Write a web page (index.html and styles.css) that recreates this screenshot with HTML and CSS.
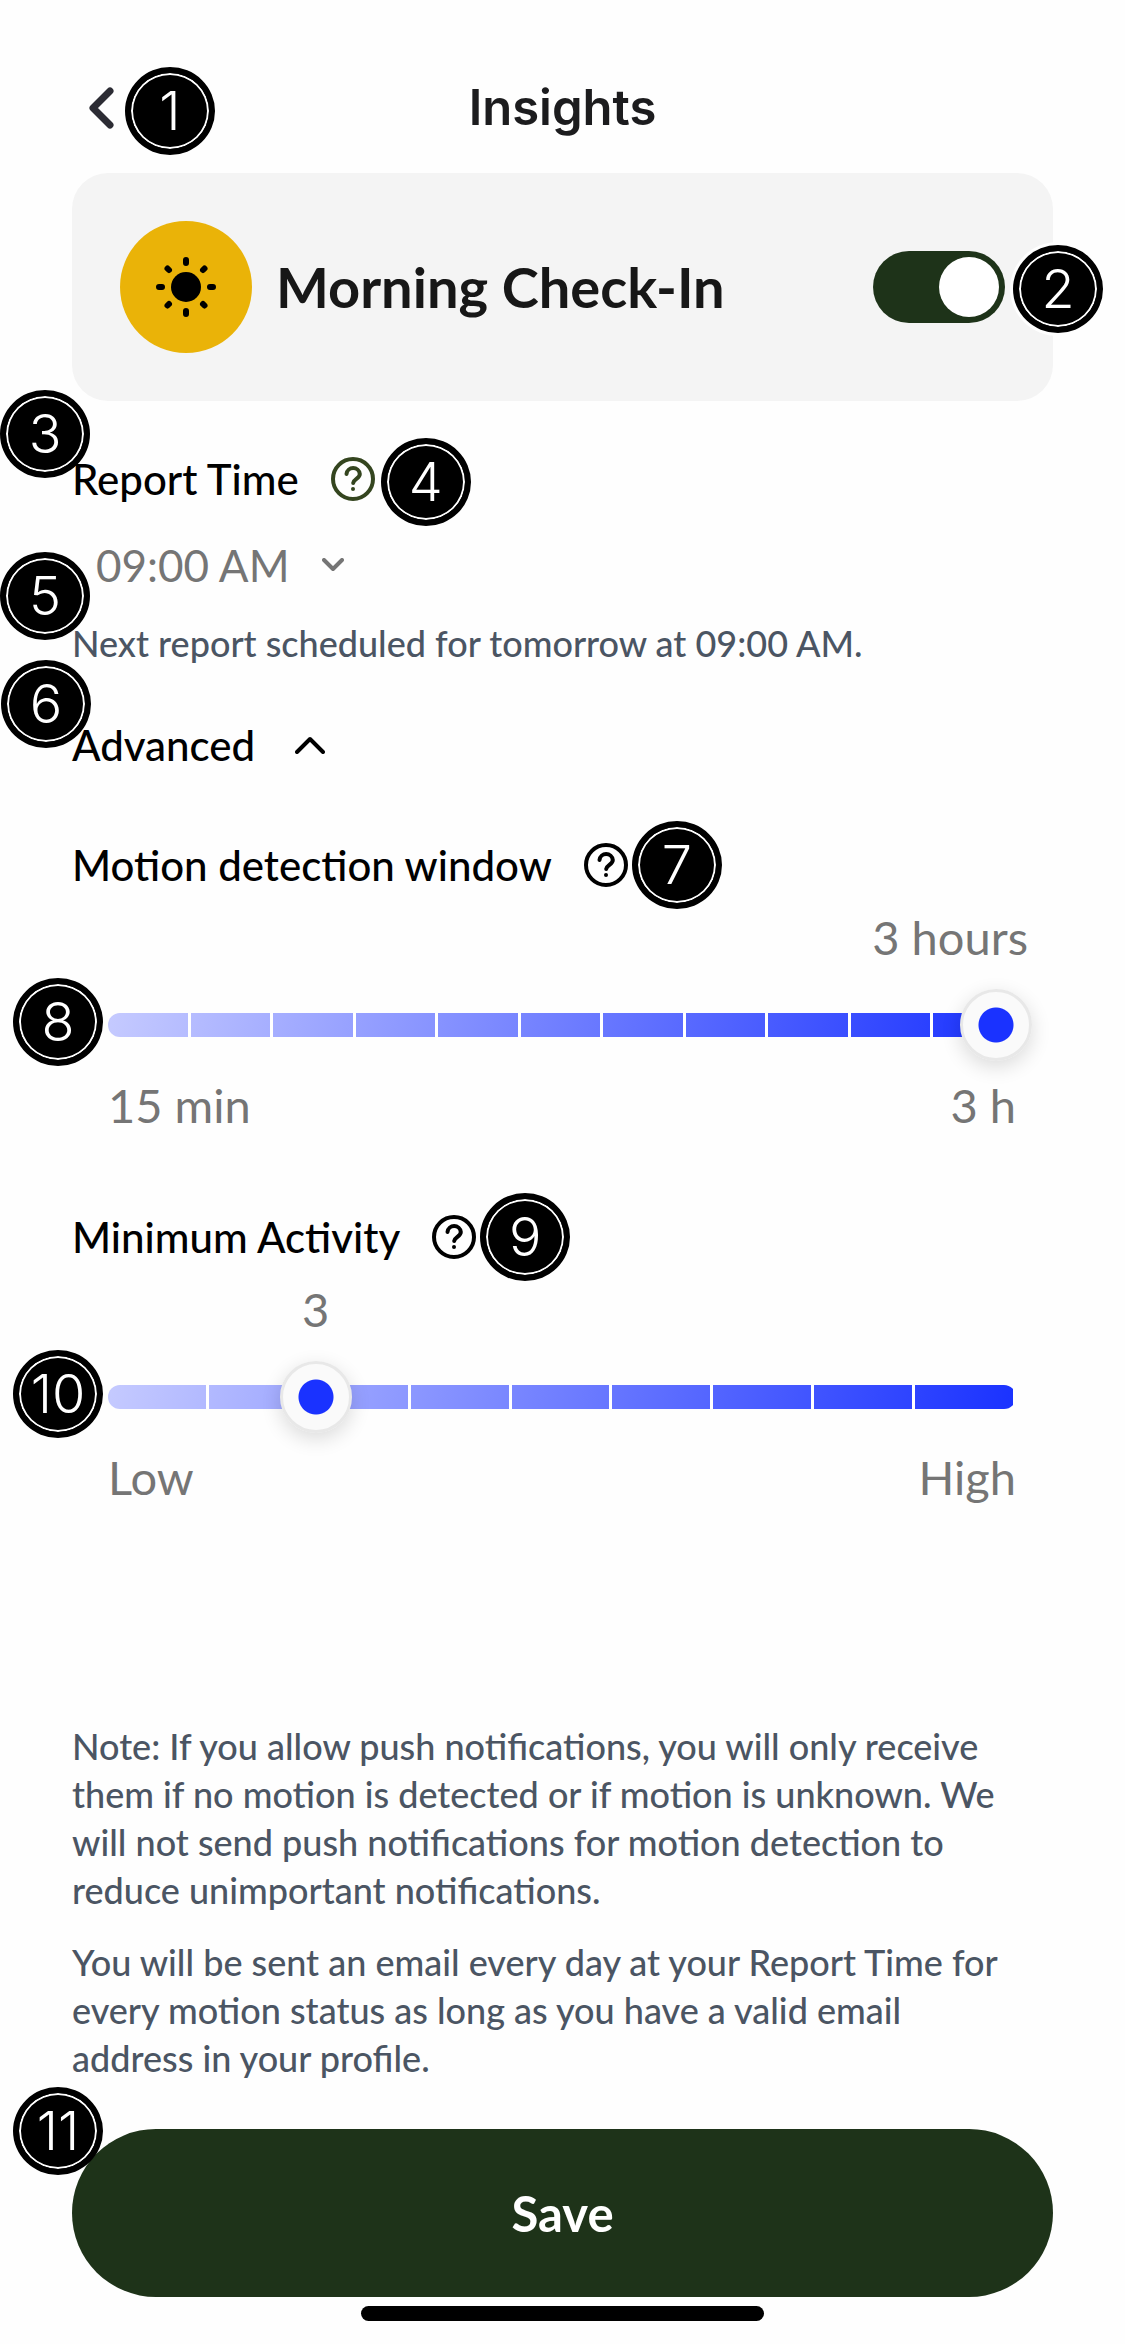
FILE: index.html
```html
<!DOCTYPE html>
<html lang="en">
<head>
<meta charset="utf-8">
<meta name="viewport" content="width=device-width, initial-scale=1">
<title>Insights</title>
<link rel="stylesheet" href="styles.css">
</head>
<body>
<svg class="sprite" aria-hidden="true">
  <symbol id="help" viewBox="0 0 44 44">
    <circle cx="22" cy="22" r="20"/>
    <path d="M15.500 17a6.700 6.700 0 0 1 13.300 0c0 4.600-6 5-6.600 9"/>
    <path class="dot" d="M22 32v.1"/>
  </symbol>
</svg>
<main class="screen">
  <header class="topbar">
    <button class="icon-button back" aria-label="Back">
      <svg width="26" height="42" viewBox="0 0 26 42"><path d="M22 4 5 21l17 17"/></svg>
      <span class="marker marker-1">1</span>
    </button>
    <h1 class="title">Insights</h1>
  </header>

  <section class="card">
    <span class="sun">
      <svg width="62" height="62" viewBox="0 0 62 62">
        <circle class="core" cx="31" cy="31" r="15"/>
        <path d="M31 4v3M31 55v3M4 31h3M55 31h3M12.500 12.500l1.500 1.500M48 48l1.500 1.500M49.500 12.500 48 14M14 48l-1.500 1.500"/>
      </svg>
    </span>
    <label class="card-title" for="morning">Morning Check-In</label>
    <span class="switch-wrap">
      <input class="switch" id="morning" type="checkbox" role="switch" checked>
      <span class="marker marker-2">2</span>
    </span>
  </section>

  <section class="report">
    <div class="row label-row">
      <span class="marker marker-3">3</span>
      <h2 class="label">Report Time</h2>
      <button class="icon-button help green" aria-label="About report time">
        <svg width="44" height="44"><use href="#help"/></svg>
        <span class="marker marker-help">4</span>
      </button>
    </div>
    <div class="row time-row">
      <span class="marker marker-5">5</span>
      <button class="time">09:00 AM
        <svg width="22" height="14" viewBox="0 0 22 14"><path d="m2 2 9 9 9-9"/></svg>
      </button>
    </div>
    <p class="text">Next report scheduled for tomorrow at 09:00 AM.</p>
  </section>

  <div class="row advanced-row">
    <span class="marker marker-6">6</span>
    <button class="label advanced" aria-expanded="true">Advanced
      <svg width="30" height="18" viewBox="0 0 30 18"><path d="M2 16 15 3l13 13"/></svg>
    </button>
  </div>

  <section class="setting">
    <div class="row label-row">
      <label class="label" for="window">Motion detection window</label>
      <button class="icon-button help" aria-label="About motion detection window">
        <svg width="44" height="44"><use href="#help"/></svg>
        <span class="marker marker-help">7</span>
      </button>
    </div>
    <div class="slider-block">
      <div class="value-row value-end"><output class="value" for="window">3 hours</output></div>
      <div class="slider">
        <span class="marker marker-slider">8</span>
        <span class="track" style="--steps: 11"></span>
        <input id="window" type="range" min="15" max="180" step="15" value="180">
      </div>
      <div class="ends"><span>15 min</span><span>3 h</span></div>
    </div>
  </section>

  <section class="setting activity">
    <div class="row label-row">
      <label class="label" for="activity">Minimum Activity</label>
      <button class="icon-button help" aria-label="About minimum activity">
        <svg width="44" height="44"><use href="#help"/></svg>
        <span class="marker marker-help">9</span>
      </button>
    </div>
    <div class="slider-block">
      <div class="value-row"><output class="value value-at" for="activity" style="--at: 22.2%">3</output></div>
      <div class="slider">
        <span class="marker marker-slider">10</span>
        <span class="track" style="--steps: 9"></span>
        <input id="activity" type="range" min="1" max="10" step="1" value="3">
      </div>
      <div class="ends"><span>Low</span><span>High</span></div>
    </div>
  </section>

  <footer class="footer">
    <p class="text">Note: If you allow push notifications, you will only receive them if no motion is detected or if motion is unknown. We will not send push notifications for motion detection to reduce unimportant notifications.</p>
    <p class="text">You will be sent an email every day at your Report Time for every motion status as long as you have a valid email address in your profile.</p>
    <div class="save-wrap">
      <button class="save">Save</button>
      <span class="marker marker-11">11</span>
    </div>
    <div class="home-bar"></div>
  </footer>
</main>
</body>
</html>
```
FILE: styles.css
```css
* {
  box-sizing: border-box;
}

body {
  margin: 0;
  background: #fefefe;
  color: #000;
  font-family: Lato, "Open Sans", sans-serif;
  font-size: 36px;
}

button {
  padding: 0;
  border: 0;
  background: none;
  color: inherit;
  font: inherit;
}

h1, h2, p {
  margin: 0;
}

svg {
  display: block;
  fill: none;
  stroke: currentColor;
  stroke-width: 4;
  stroke-linecap: round;
  stroke-linejoin: round;
}

.sprite {
  position: absolute;
  width: 0;
  height: 0;
}

.screen {
  display: flex;
  flex-direction: column;
  min-height: 100vh;
  padding: 64px 72px 23px;
}

.row,
.icon-button,
.switch-wrap,
.slider,
.save-wrap {
  position: relative;
}

.row {
  display: flex;
  align-items: center;
  height: 60px;
}

/* Header */
.topbar {
  display: grid;
  grid-template-columns: 1fr auto 1fr;
  align-items: center;
  height: 88px;
}

.back {
  justify-self: start;
  margin-left: 16px;
  color: #2c2c34;
}

.back svg {
  stroke-width: 7;
}

.title {
  color: #1c1c1e;
  font-family: Inter, sans-serif;
  font-size: 49px;
  font-weight: 600;
  line-height: 60px;
}

/* Card */
.card {
  display: flex;
  align-items: center;
  gap: 24px;
  margin-top: 21px;
  padding: 48px;
  border-radius: 36px;
  background: #f4f4f4;
}

.sun {
  display: grid;
  place-items: center;
  width: 132px;
  height: 132px;
  border-radius: 50%;
  background: #eab308;
  color: #000;
}

.sun svg {
  stroke-width: 6;
}

.sun .core {
  fill: currentColor;
  stroke: none;
}

.card-title {
  flex: 1;
  color: #171717;
  font-size: 56px;
  font-weight: 700;
  line-height: 72px;
}

.switch-wrap {
  display: flex;
}

.switch {
  appearance: none;
  display: flex;
  width: 132px;
  height: 72px;
  margin: 0;
  padding: 6px;
  border-radius: 36px;
  background: #a3a3a3;
}

.switch::before {
  content: "";
  width: 60px;
  height: 60px;
  border-radius: 50%;
  background: #fff;
}

.switch:checked {
  justify-content: flex-end;
  background: #1e3319;
}

/* Report time */
.report {
  margin-top: 48px;
}

.label {
  font-size: 42px;
  font-weight: 500;
  line-height: 60px;
}

.label-row {
  gap: 32px;
}

.help .dot {
  stroke-width: 5;
}

.green {
  color: #34451f;
}

.time-row {
  margin: 26px 0 24px;
  padding-left: 24px;
}

.time {
  display: flex;
  align-items: center;
  gap: 32px;
  color: #757575;
  font-size: 44px;
  line-height: 60px;
}

.text {
  padding-right: 28px;
  color: #4b5563;
  font-weight: 500;
  line-height: 48px;
}

/* Advanced settings */
.advanced-row {
  margin-top: 48px;
}

.advanced {
  display: flex;
  align-items: center;
  gap: 40px;
}

.setting {
  margin-top: 60px;
}

.activity {
  margin-top: 72px;
}

.slider-block {
  margin-top: 12px;
  padding: 0 37px 0 36px;
  color: #757575;
  font-size: 47px;
  font-weight: 400;
  line-height: 60px;
}

.value-row {
  display: flex;
}

.value-end {
  justify-content: flex-end;
  margin-right: -12px;
}

.value-at {
  width: 48px;
  margin-left: calc(var(--at) - 18px);
  text-align: center;
}

.slider {
  display: grid;
  align-items: center;
  margin: 22px 0 14px;
}

.track,
.slider input {
  grid-area: 1 / 1;
}

.track {
  height: 24px;
  border-radius: 12px;
  background:
    repeating-linear-gradient(90deg, transparent 0 calc(100% / var(--steps) - 3px), #fff calc(100% / var(--steps) - 3px) calc(100% / var(--steps))),
    linear-gradient(100deg, #c5caff, #1a32ff);
}

.slider input {
  appearance: none;
  width: calc(100% + 38px);
  height: 72px;
  margin: 0 0 0 -22px;
  background: none;
}

.slider input::-webkit-slider-thumb {
  appearance: none;
  width: 72px;
  height: 72px;
  border: 3px solid #e8e8e8;
  border-radius: 50%;
  background: radial-gradient(circle, #1a32ff 0 17px, #fafafa 18px);
  box-shadow: 0 6px 20px rgb(0 0 0 / 14%);
}

.ends {
  display: flex;
  justify-content: space-between;
}

/* Footer */
.footer {
  display: flex;
  flex-direction: column;
  gap: 24px;
  margin-top: auto;
}

.save-wrap {
  margin-top: 23px;
}

.save {
  display: block;
  width: 100%;
  height: 168px;
  border-radius: 84px;
  background: #1e3319;
  color: #fff;
  font-size: 49px;
  font-weight: 700;
}

.home-bar {
  align-self: center;
  width: 41%;
  height: 15px;
  margin-top: -15px;
  border-radius: 8px;
  background: #000;
}

/* Numbered callouts laid over the screen */
.marker {
  position: absolute;
  z-index: 1;
  display: grid;
  place-items: center;
  width: 90px;
  height: 88px;
  border: 6px solid #000;
  border-radius: 50%;
  background: #000;
  box-shadow: inset 0 0 0 2px #fff;
  color: #fff;
  font-family: Inter, sans-serif;
  font-size: 54px;
  font-weight: 300;
  line-height: 60px;
}

.marker-1 { left: 37px; top: -20px; }
.marker-2 {
  left: 140px;
  top: -6px;
  box-shadow: inset 0 0 0 2px #fff, 0 0 0 3px #fefefe;
}
.marker-3 { left: -72px; top: -59px; }
.marker-5 { left: -72px; top: 17px; }
.marker-6 { left: -71px; top: -55px; }
.marker-11 { left: -59px; top: -42px; }
.marker-help { left: 50px; top: -19px; }
.setting .marker-help { left: 48px; top: -22px; }
.marker-slider { left: -95px; top: -11px; }
```
